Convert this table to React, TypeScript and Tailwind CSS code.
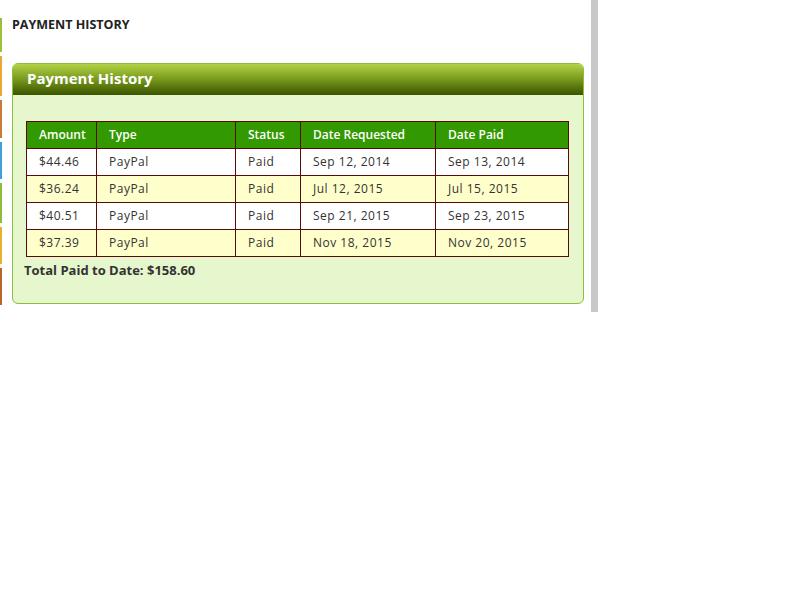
import React from "react";

type Pago = { monto: string; tipo: string; estado: string; solicitado: string; pagado: string };

const pagos: Pago[] = [
  { monto: "$44.46", tipo: "PayPal", estado: "Paid", solicitado: "Sep 12, 2014", pagado: "Sep 13, 2014" },
  { monto: "$36.24", tipo: "PayPal", estado: "Paid", solicitado: "Jul 12, 2015", pagado: "Jul 15, 2015" },
  { monto: "$40.51", tipo: "PayPal", estado: "Paid", solicitado: "Sep 21, 2015", pagado: "Sep 23, 2015" },
  { monto: "$37.39", tipo: "PayPal", estado: "Paid", solicitado: "Nov 18, 2015", pagado: "Nov 20, 2015" },
];

// Tiras de colores del menú lateral, cortadas en el borde izquierdo.
const tiras = [
  { h: "h-[34px]", c: "bg-[#9fbf3a]" },
  { h: "h-[40px]", c: "bg-[#e8a732]" },
  { h: "h-[38px]", c: "bg-[#c97a3a]" },
  { h: "h-[37px]", c: "bg-[#3fa0d8]" },
  { h: "h-[40px]", c: "bg-[#8dbb3a]" },
  { h: "h-[37px]", c: "bg-[#e8b030]" },
  { h: "h-[37px]", c: "bg-[#b8652a]" },
];

const th = "border border-[#5a0a0a] pl-[12px] text-left font-semibold text-white h-[27px]";
const td = "border border-[#5a0a0a] pl-[12px] h-[27px] text-[#333] tracking-[0.5px]";

export default function App() {
  return (
    <div className="flex w-[800px] h-[600px] bg-white font-['Open_Sans',sans-serif]">
      <div className="flex w-[2px] flex-col gap-[4px] pt-[18px]">
        {tiras.map((t, i) => (
          <div key={i} className={`${t.h} ${t.c} w-[2px]`} />
        ))}
      </div>
      <div className="w-[589px] pl-[10px] pr-[7px]">
        <h1 className="pt-[16px] text-[12.5px] font-bold text-[#222] h-[63px]">PAYMENT HISTORY</h1>
        <div className="h-[241px] rounded-[6px] border border-[#8dbd3c] bg-[#e6f6cd] overflow-hidden">
          <div className="h-[31px] bg-gradient-to-b from-[#b3d245] via-[#77991c] to-[#3c5400] pl-[14px] pt-[3px] text-[15px] font-bold text-white">
            Payment History
          </div>
          <div className="px-[13px] pt-[26px]">
            <table className="w-[543px] border-collapse text-[12px]">
              <thead>
                <tr className="bg-[#339900]">
                  <th className={`${th} w-[70px]`}>Amount</th>
                  <th className={`${th} w-[139px]`}>Type</th>
                  <th className={`${th} w-[65px]`}>Status</th>
                  <th className={`${th} w-[135px]`}>Date Requested</th>
                  <th className={th}>Date Paid</th>
                </tr>
              </thead>
              <tbody>
                {pagos.map((p, i) => (
                  <tr key={i} className={i % 2 === 0 ? "bg-white" : "bg-[#ffffcc]"}>
                    <td className={td}>{p.monto}</td>
                    <td className={td}>{p.tipo}</td>
                    <td className={td}>{p.estado}</td>
                    <td className={td}>{p.solicitado}</td>
                    <td className={td}>{p.pagado}</td>
                  </tr>
                ))}
              </tbody>
            </table>
            <p className="-ml-[2px] pt-[4px] text-[13px] font-bold text-[#333]">Total Paid to Date: $158.60</p>
          </div>
        </div>
      </div>
      <div className="h-[312px] w-[7px] bg-[#c8c8c8]" />
    </div>
  );
}
